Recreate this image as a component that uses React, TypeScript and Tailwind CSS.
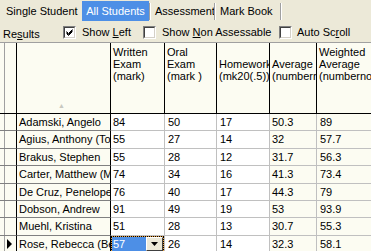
import React from "react";

const rows = [
  { name: "Adamski, Angelo", w: "84", o: "50", h: "17", a: "50.3", wa: "89" },
  { name: "Agius, Anthony (Tony)", w: "55", o: "27", h: "14", a: "32", wa: "57.7" },
  { name: "Brakus, Stephen", w: "55", o: "28", h: "12", a: "31.7", wa: "56.3" },
  { name: "Carter, Matthew (Matt)", w: "74", o: "34", h: "16", a: "41.3", wa: "73.4" },
  { name: "De Cruz, Penelope", w: "76", o: "40", h: "17", a: "44.3", wa: "79" },
  { name: "Dobson, Andrew", w: "91", o: "49", h: "19", a: "53", wa: "93.9" },
  { name: "Muehl, Kristina", w: "51", o: "28", h: "13", a: "30.7", wa: "55.3" },
  { name: "Rose, Rebecca (Becky)", w: "57", o: "26", h: "14", a: "32.3", wa: "58.1" },
];

const font = { fontFamily: '"Liberation Sans", Arial, sans-serif' };

function Check({ checked }: { checked?: boolean }) {
  return (
    <div className="relative h-[13px] w-[13px] shrink-0 border border-t-[#808080] border-l-[#808080] border-r-white border-b-white">
      <div className="h-full w-full border border-t-[#404040] border-l-[#404040] border-r-[#d4d0c8] border-b-[#d4d0c8] bg-white">
        {checked && (
          <svg width="9" height="9" viewBox="0 0 9 9" className="block">
            <path d="M1.5 3.5 L3.5 5.5 L7.5 1.5 M1.5 4.5 L3.5 6.5 L7.5 2.5 M1.5 5.5 L3.5 7.5 L7.5 3.5" stroke="#000" strokeWidth="1" fill="none" />
          </svg>
        )}
      </div>
    </div>
  );
}

function Sep() {
  return <div className="mt-[3px] h-[17px] w-[2px] shrink-0 border-l border-l-[#a0a0a0] border-r border-r-white" />;
}

function HeadCell({ lines, w }: { lines: string[]; w: string }) {
  const slots = lines.length === 2 ? ["", ...lines] : lines;
  return (
    <div className={`${w} shrink-0 overflow-hidden border-r border-black pl-[2px] pt-[3px]`}>
      {slots.map((l, i) => (
        <div key={i} className="h-[12px] whitespace-nowrap leading-[12px]">
          {l}
        </div>
      ))}
    </div>
  );
}

export default function App() {
  return (
    <div className="h-[251px] w-[371px] overflow-hidden bg-[#ece9d8] text-[11px] text-black" style={font}>
      {/* tabs */}
      <div className="flex h-[22px] items-start">
        <div className="flex h-[22px] w-[82px] items-center pl-[6px]">Single Student</div>
        <div className="mt-[1px] flex h-[20px] w-[67px] items-center justify-center bg-[#4d8fe6] text-white">All Students</div>
        <Sep />
        <div className="flex h-[22px] w-[63px] items-center pl-[4px]">Assessment</div>
        <Sep />
        <div className="flex h-[22px] w-[64px] items-center pl-[4px]">Mark Book</div>
        <Sep />
      </div>

      {/* options row */}
      <div className="flex h-[20px] items-start">
        <div className="w-[63px] pl-[3px] pt-[6px] leading-[13px]">
          Re<span className="underline">s</span>ults
        </div>
        <div className="flex w-[80px] items-center gap-[6px] pt-[4px]">
          <Check checked />
          <span className="leading-[13px]">
            Show <span className="underline">L</span>eft
          </span>
        </div>
        <div className="flex w-[136px] items-center gap-[6px] pt-[4px]">
          <Check />
          <span className="leading-[13px]">
            Show <span className="underline">N</span>on Assessable
          </span>
        </div>
        <div className="flex items-center gap-[5px] pt-[4px]">
          <Check />
          <span className="leading-[13px]">
            Auto Sc<span className="underline">r</span>oll
          </span>
        </div>
      </div>

      {/* grid */}
      <div className="border-t border-[#a0a0a0] bg-white">
        <div className="flex h-[71px] border-b border-black bg-[#fcfcf2]">
          <div className="flex w-[17px] shrink-0 border-r border-black">
            <div className="w-[5px] border-r border-[#a0a0a0]" />
          </div>
          <div className="relative w-[94px] shrink-0 border-r border-black">
            <span className="absolute bottom-[4px] left-[41px] text-[7px] leading-[7px] text-[#c8c8c0]">▲</span>
          </div>
          <HeadCell w="w-[54px]" lines={["Written", "Exam", "(mark)"]} />
          <HeadCell w="w-[52px]" lines={["Oral", "Exam", "(mark )"]} />
          <HeadCell w="w-[53px]" lines={["Homework", "(mk20(.5))"]} />
          <HeadCell w="w-[47px]" lines={["Average", "(numbermark)"]} />
          <HeadCell w="w-[60px]" lines={["Weighted", "Average", "(numbernonmark)"]} />
        </div>

        {rows.map((r, i) => {
          const current = i === rows.length - 1;
          return (
            <div key={r.name} className="flex h-[17.4px] leading-[16px]">
              <div className="flex w-[17px] shrink-0 border-r border-b border-r-black border-b-[#808080] bg-[#fcfcf2]">
                <div className="w-[5px] border-r border-[#a0a0a0]" />
                {current && (
                  <svg width="8" height="16" viewBox="0 0 8 16" className="ml-[1px]">
                    <path d="M1 3 L6 8 L1 13 Z" fill="#000" />
                  </svg>
                )}
              </div>
              <div className="w-[94px] shrink-0 overflow-hidden whitespace-nowrap border-r border-b border-r-black border-b-[#808080] bg-[#fcfcf2] pl-[2px]">
                {r.name}
              </div>
              {current ? (
                <div className="flex w-[54px] shrink-0 border-r border-b border-r-[#c0c0c0] border-b-[#c0c0c0]">
                  <div className="flex flex-1 border border-dotted border-black bg-[#e8a040]">
                    <div className="flex-1 bg-[#4d8fe6] pl-[1px] leading-[14px] text-white">{r.w}</div>
                    <div className="flex w-[17px] items-center justify-center border border-t-white border-l-white border-r-[#404040] border-b-[#404040] bg-[#ece9d8]">
                      <svg width="7" height="4" viewBox="0 0 7 4">
                        <path d="M0 0 H7 L3.5 4 Z" fill="#000" />
                      </svg>
                    </div>
                  </div>
                </div>
              ) : (
                <div className="w-[54px] shrink-0 overflow-hidden border-r border-b border-[#c0c0c0] pl-[2px]">{r.w}</div>
              )}
              <div className="w-[52px] shrink-0 overflow-hidden border-r border-b border-[#c0c0c0] pl-[3px]">{r.o}</div>
              <div className="w-[53px] shrink-0 overflow-hidden border-r border-b border-[#c0c0c0] pl-[3px]">{r.h}</div>
              <div className="w-[47px] shrink-0 overflow-hidden border-r border-b border-[#c0c0c0] bg-[#fcfcf2] pl-[2px]">{r.a}</div>
              <div className="w-[60px] shrink-0 overflow-hidden border-b border-[#c0c0c0] bg-[#fcfcf2] pl-[3px]">{r.wa}</div>
            </div>
          );
        })}
      </div>
    </div>
  );
}
